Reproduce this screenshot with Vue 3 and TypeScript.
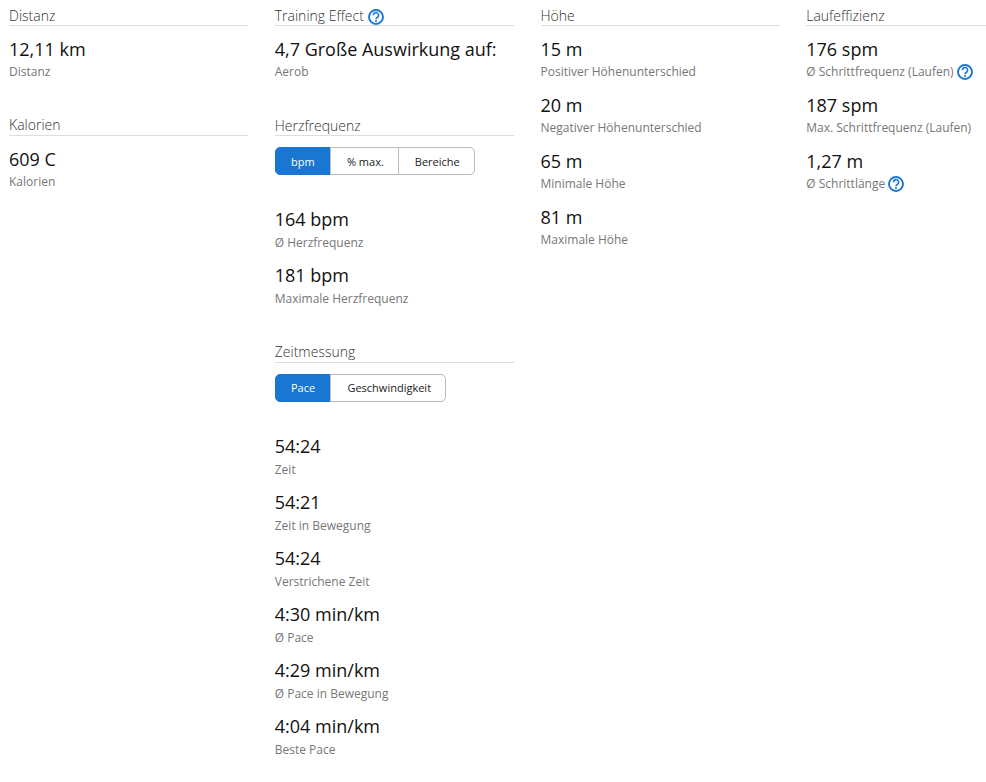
<script setup lang="ts">
interface Stat { value: string; label: string; help?: boolean }
interface Section { title: string; help?: boolean; buttons?: string[]; stats: Stat[] }

const columns: Section[][] = [
  [
    { title: 'Distanz', stats: [{ value: '12,11 km', label: 'Distanz' }] },
    { title: 'Kalorien', stats: [{ value: '609 C', label: 'Kalorien' }] },
  ],
  [
    { title: 'Training Effect', help: true, stats: [{ value: '4,7 Große Auswirkung auf:', label: 'Aerob' }] },
    {
      title: 'Herzfrequenz',
      buttons: ['bpm', '% max.', 'Bereiche'],
      stats: [
        { value: '164 bpm', label: 'Ø Herzfrequenz' },
        { value: '181 bpm', label: 'Maximale Herzfrequenz' },
      ],
    },
    {
      title: 'Zeitmessung',
      buttons: ['Pace', 'Geschwindigkeit'],
      stats: [
        { value: '54:24', label: 'Zeit' },
        { value: '54:21', label: 'Zeit in Bewegung' },
        { value: '54:24', label: 'Verstrichene Zeit' },
        { value: '4:30 min/km', label: 'Ø Pace' },
        { value: '4:29 min/km', label: 'Ø Pace in Bewegung' },
        { value: '4:04 min/km', label: 'Beste Pace' },
      ],
    },
  ],
  [
    {
      title: 'Höhe',
      stats: [
        { value: '15 m', label: 'Positiver Höhenunterschied' },
        { value: '20 m', label: 'Negativer Höhenunterschied' },
        { value: '65 m', label: 'Minimale Höhe' },
        { value: '81 m', label: 'Maximale Höhe' },
      ],
    },
  ],
  [
    {
      title: 'Laufeffizienz',
      stats: [
        { value: '176 spm', label: 'Ø Schrittfrequenz (Laufen)', help: true },
        { value: '187 spm', label: 'Max. Schrittfrequenz (Laufen)' },
        { value: '1,27 m', label: 'Ø Schrittlänge', help: true },
      ],
    },
  ],
]
</script>

<template>
  <div class="page">
    <div v-for="(col, c) in columns" :key="c" class="column">
      <section
        v-for="sec in col"
        :key="sec.title"
        class="section"
        :class="{ 'has-buttons': sec.buttons, 'has-help': sec.help }"
      >
        <h3 class="title">
          {{ sec.title }}
          <svg v-if="sec.help" class="help" viewBox="0 0 16 16" aria-hidden="true">
            <circle cx="8" cy="8" r="7" fill="none" stroke="#1976d2" stroke-width="1.9" />
            <path d="M5.4 6.2a2.6 2.6 0 1 1 4.1 2.1c-1 .6-1.5 1-1.5 2" fill="none" stroke="#1976d2" stroke-width="1.6" />
            <circle cx="8" cy="12.1" r="1" fill="#1976d2" />
          </svg>
        </h3>
        <div v-if="sec.buttons" class="btn-group">
          <button v-for="(b, i) in sec.buttons" :key="b" class="btn" :class="{ active: i === 0 }">{{ b }}</button>
        </div>
        <div class="stat" v-for="s in sec.stats" :key="s.label">
          <div class="value">{{ s.value }}</div>
          <div class="label">
            {{ s.label }}
            <svg v-if="s.help" class="help" viewBox="0 0 16 16" aria-hidden="true">
              <circle cx="8" cy="8" r="7" fill="none" stroke="#1976d2" stroke-width="1.9" />
              <path d="M5.4 6.2a2.6 2.6 0 1 1 4.1 2.1c-1 .6-1.5 1-1.5 2" fill="none" stroke="#1976d2" stroke-width="1.6" />
              <circle cx="8" cy="12.1" r="1" fill="#1976d2" />
            </svg>
          </div>
        </div>
      </section>
    </div>
  </div>
</template>

<style>
html, body { margin: 0; background: #fff; overflow: hidden; }
</style>

<style scoped>
.page {
  display: grid;
  grid-template-columns: repeat(4, 239px);
  column-gap: 26.75px;
  width: 986px;
  height: 782px;
  padding-left: 9px;
  box-sizing: border-box;
  overflow: hidden;
  font-family: "Open Sans", sans-serif;
  color: #111;
}
.section { margin-bottom: 17.5px; }
.section.has-help { margin-bottom: 18px; }
.section.has-buttons { margin-bottom: 18.5px; }
.title {
  margin: 0 0 10px;
  height: 25px;
  border-bottom: 1px solid #ddd;
  padding: 0;
  font-size: 14px;
  font-weight: 300;
  line-height: 19.2px;
  color: #333;
  white-space: nowrap;
  display: flex;
  align-items: flex-end;
  gap: 4px;
}
.btn-group {
  display: flex;
  margin: 11px 0 31px;
  height: 28px;
}
.btn {
  font-family: inherit;
  font-size: 11px;
  line-height: 1;
  height: 28px;
  padding: 0 14px 0 16px;
  margin: 0 0 0 -1px;
  background: #fff;
  color: #222;
  border: 1px solid #bbb;
}
.btn:first-child {
  margin-left: 0;
  padding: 0 15.25px;
  border-radius: 5px 0 0 5px;
  border-color: #1976d2;
}
.btn:last-child { padding-right: 14.25px; border-radius: 0 5px 5px 0; }
.btn.active { background: #1976d2; color: #fff; }
.stat { height: 56px; white-space: nowrap; }
.value { font-size: 18px; line-height: 26px; }
.label {
  font-size: 12px;
  line-height: 18px;
  margin-top: 1px;
  color: #777;
  display: flex;
  align-items: center;
  gap: 3px;
}
.has-buttons .label { margin-top: 2px; }
.help { width: 16px; height: 16px; flex: none; }
</style>
